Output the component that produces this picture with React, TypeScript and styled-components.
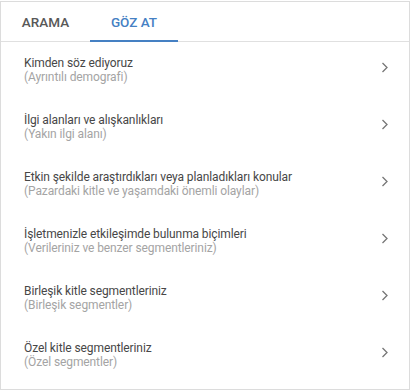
import React, { useState } from "react";
import styled, { createGlobalStyle } from "styled-components";

const GlobalStyle = createGlobalStyle`
  body {
    margin: 0;
    background: #ffffff;
    font-family: Roboto, "Liberation Sans", Arial, sans-serif;
  }
`;

const Card = styled.div`
  width: 410px;
  height: 389px;
  margin-top: 1px;
  box-sizing: border-box;
  border: 1px solid #dcdcdc;
  background: #fff;
`;

const Tabs = styled.div`
  display: flex;
  height: 39px;
  border-bottom: 1px solid #e0e0e0;
`;

const Tab = styled.div<{ $active?: boolean; $width: number }>`
  display: flex;
  align-items: center;
  justify-content: center;
  box-sizing: border-box;
  width: ${(p) => p.$width}px;
  height: 40px;
  padding-top: 2px;
  font-size: 13.5px;
  font-weight: 500;
  color: ${(p) => (p.$active ? "#4580c3" : "#585858")};
  border-bottom: 2px solid ${(p) => (p.$active ? "#4580c3" : "transparent")};
  cursor: pointer;
`;

const List = styled.div`
  display: flex;
  flex-direction: column;
`;

const Row = styled.div`
  display: flex;
  align-items: center;
  height: 57px;
  padding: 0 20px 0 23px;
  cursor: pointer;
`;

const Texts = styled.div`
  flex: 1;
  display: flex;
  flex-direction: column;
  font-size: 12px;
  line-height: 14px;
  letter-spacing: -0.1px;
  padding-bottom: 1px;
`;

const Title = styled.div`
  color: #474747;
`;

const Subtitle = styled.div`
  color: #a4a4a4;
`;

const Chevron = styled.svg`
  width: 8px;
  height: 11px;
  margin-bottom: 7px;
  fill: none;
  stroke: #767676;
  stroke-width: 1.3;
`;

const items = [
  ["Kimden söz ediyoruz", "(Ayrıntılı demografi)"],
  ["İlgi alanları ve alışkanlıkları", "(Yakın ilgi alanı)"],
  [
    "Etkin şekilde araştırdıkları veya planladıkları konular",
    "(Pazardaki kitle ve yaşamdaki önemli olaylar)",
  ],
  [
    "İşletmenizle etkileşimde bulunma biçimleri",
    "(Verileriniz ve benzer segmentleriniz)",
  ],
  ["Birleşik kitle segmentleriniz", "(Birleşik segmentler)"],
  ["Özel kitle segmentleriniz", "(Özel segmentler)"],
];

const App = () => {
  const [tab, setTab] = useState(1);
  return (
    <>
      <GlobalStyle />
      <Card>
        <Tabs>
          <Tab $width={89} $active={tab === 0} onClick={() => setTab(0)}>
            ARAMA
          </Tab>
          <Tab $width={88} $active={tab === 1} onClick={() => setTab(1)}>
            GÖZ AT
          </Tab>
        </Tabs>
        <List>
          {items.map(([title, sub]) => (
            <Row key={title}>
              <Texts>
                <Title>{title}</Title>
                <Subtitle>{sub}</Subtitle>
              </Texts>
              <Chevron viewBox="0 0 8 11">
                <polyline points="1.5,1 6,5.5 1.5,10" />
              </Chevron>
            </Row>
          ))}
        </List>
      </Card>
    </>
  );
};

export default App;
